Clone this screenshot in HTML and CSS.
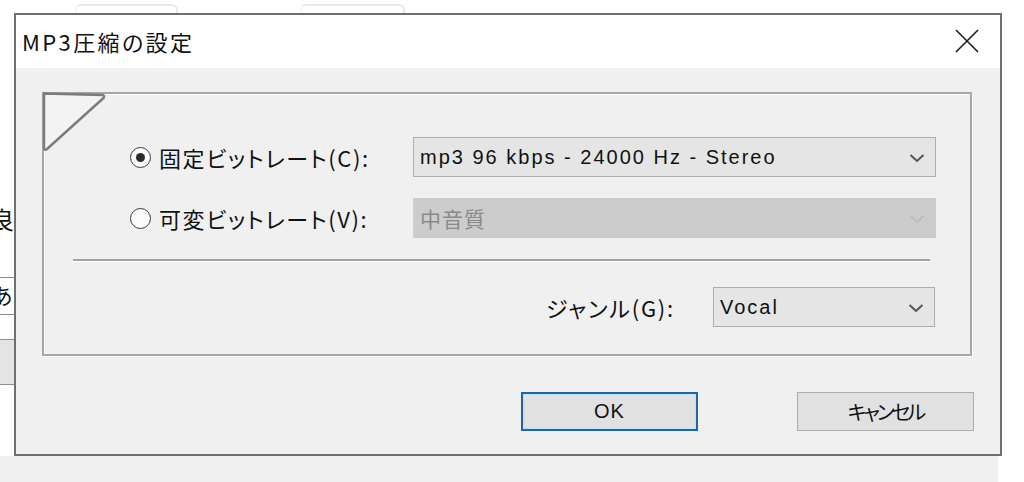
FILE: index.html
```html
<!DOCTYPE html>
<html lang="ja">
<head>
<meta charset="utf-8">
<title>MP3圧縮の設定</title>
<link rel="stylesheet" href="styles.css">
</head>
<body>
<div class="screen">
  <div class="top-strip">
    <span class="ghost ghost-a"></span>
    <span class="ghost ghost-b"></span>
  </div>
  <div class="mid">
    <div class="left-strip jp">
      <div class="ls-char ls-char-a">良</div>
      <div class="ls-line ls-line-a"></div>
      <div class="ls-char ls-char-b">あ</div>
      <div class="ls-line ls-line-b"></div>
      <div class="ls-line ls-line-c"></div>
      <div class="ls-band"></div>
      <div class="ls-line"></div>
    </div>
    <div class="dialog">
      <div class="titlebar">
        <span class="title jp">MP3圧縮の設定</span>
        <svg class="close" width="26" height="26" viewBox="0 0 26 26">
          <path d="M2 2 L24 24 M24 2 L2 24" stroke="#1a1a1a" stroke-width="1.6" fill="none"/>
        </svg>
      </div>
      <div class="body">
        <div class="group">
          <svg class="fold" width="68" height="64" viewBox="0 0 68 64">
            <path d="M3 2.5 L62 4 Q64 5 62.5 7 L6 58 Q3.5 60 3 57 Z" fill="#f3f3f3" stroke="#7b7b7b" stroke-width="2.4" stroke-linejoin="round"/>
          </svg>
          <div class="opt-grid">
            <div class="radio-row jp"><span class="radio checked"></span><span class="label">固定ビットレート(C):</span></div>
            <div class="combo">
              <span class="combo-text">mp3 96 kbps - 24000 Hz - Stereo</span>
              <svg class="chev" width="16" height="10" viewBox="0 0 16 10"><path d="M1.5 2 L8 8 L14.5 2" stroke="#555" stroke-width="2" fill="none"/></svg>
            </div>
            <div class="radio-row jp"><span class="radio"></span><span class="label">可変ビットレート(V):</span></div>
            <div class="combo disabled">
              <span class="combo-text jp">中音質</span>
              <svg class="chev" width="16" height="10" viewBox="0 0 16 10"><path d="M1.5 2 L8 8 L14.5 2" stroke="#bdbdbd" stroke-width="2" fill="none"/></svg>
            </div>
          </div>
          <div class="sep"></div>
          <div class="genre-row">
            <span class="label jp genre-label">ジャンル(G):</span>
            <div class="combo genre">
              <span class="combo-text">Vocal</span>
              <svg class="chev" width="16" height="10" viewBox="0 0 16 10"><path d="M1.5 2 L8 8 L14.5 2" stroke="#555" stroke-width="2" fill="none"/></svg>
            </div>
          </div>
        </div>
        <div class="buttons">
          <div class="btn default">OK</div>
          <div class="btn jp cancel">キャンセル</div>
        </div>
      </div>
    </div>
    <div class="right-strip"></div>
  </div>
  <div class="bottom-strip"><div class="bs-gray"></div></div>
</div>
</body>
</html>
```

FILE: styles.css
```css
* { box-sizing: border-box; }
html, body { margin: 0; padding: 0; }
body {
  width: 1024px;
  height: 482px;
  overflow: hidden;
  background: #ffffff;
  font-family: "Liberation Sans", Arial, sans-serif;
  color: #000;
}
.jp {
  font-family: "Noto Sans CJK JP", "Noto Sans", sans-serif;
  font-feature-settings: "palt" 1;
}
.screen {
  width: 1024px;
  height: 482px;
  display: flex;
  flex-direction: column;
}

/* background window remnants */
.top-strip {
  height: 13px;
  display: flex;
  align-items: flex-start;
  padding-left: 75px;
  gap: 122px;
  background: #fff;
}
.ghost {
  display: block;
  margin-top: 4px;
  height: 9px;
  border: 2px solid #e8e8e8;
  border-bottom: none;
  border-left-color: #f6f6f6;
  border-radius: 6px 6px 0 0;
}
.ghost-a { width: 103px; }
.ghost-b { width: 105px; }

.mid {
  height: 443px;
  display: flex;
}
.left-strip {
  width: 14px;
  background: #fff;
  overflow: hidden;
  display: flex;
  flex-direction: column;
}
.ls-char {
  font-size: 24px;
  line-height: 26px;
  white-space: nowrap;
  color: #111;
}
.ls-char-a { margin-top: 193px; margin-left: -10px; }
.ls-line { height: 1px; background: #8e8e8e; flex: none; }
.ls-line-a { margin-top: 45px; }
.ls-char-b { margin-top: 4px; margin-left: -9px; font-size: 22px; line-height: 24px; }
.ls-line-b { margin-top: 8px; }
.ls-line-c { margin-top: 24px; }
.ls-band { height: 44px; background: #e4e4e4; }

.dialog {
  width: 988px;
  height: 443px;
  border: 2px solid #6f6f6f;
  display: flex;
  flex-direction: column;
  background: #f0f0f0;
}
.titlebar {
  height: 53px;
  background: #fff;
  display: flex;
  align-items: center;
  justify-content: space-between;
  padding: 0 20px 0 6px;
}
.title {
  font-size: 22px;
  letter-spacing: 2.4px;
  color: #111;
  margin-top: -2px;
}
.close { display: block; margin-top: -1px; }

.body {
  flex: 1;
  padding: 24px 26px 0 26px;
  display: flex;
  flex-direction: column;
}
.group {
  position: relative;
  margin-right: 2px;
  border: 2px solid #a6a6a6;
  box-shadow: 1px 1px 0 #ffffff, inset 1px 1px 0 #ffffff;
  padding: 43px 34px 27px 86px;
}
.fold {
  position: absolute;
  left: -3px;
  top: -3px;
}
.opt-grid {
  display: grid;
  grid-template-columns: 283px 523px;
  grid-auto-rows: 40px;
  row-gap: 21px;
}
.radio-row {
  display: flex;
  align-items: center;
  gap: 8px;
}
.label {
  font-size: 22px;
  letter-spacing: 1.6px;
  color: #111;
}
.radio {
  width: 21px;
  height: 21px;
  border-radius: 50%;
  border: 1.6px solid #3a3a3a;
  background: #fbfbfb;
  display: flex;
  align-items: center;
  justify-content: center;
  flex: none;
}
.radio.checked::after {
  content: "";
  width: 9px;
  height: 9px;
  border-radius: 50%;
  background: #2b2b2b;
}
.combo {
  height: 40px;
  border: 1px solid #adadad;
  background: #e5e5e5;
  display: flex;
  align-items: center;
  justify-content: space-between;
  padding: 0 10px 0 6px;
}
.combo-text {
  font-size: 20px;
  letter-spacing: 2px;
  color: #111;
}
.chev { display: block; margin-top: 2px; }
.combo.disabled {
  background: #cccccc;
  border-color: #cccccc;
}
.combo.disabled .combo-text {
  color: #8a8a8a;
  font-size: 21px;
  letter-spacing: 1px;
}
.sep {
  margin: 21px 6px 0 -57px;
  height: 3px;
  border-top: 2px solid #a3a3a3;
  border-bottom: 1px solid #ffffff;
}
.genre-row {
  margin-top: 25px;
  display: flex;
  justify-content: flex-end;
  align-items: center;
  gap: 38px;
  padding-right: 1px;
}
.genre-label { letter-spacing: 1.8px; }
.combo.genre { width: 222px; }

.buttons {
  margin-top: 36px;
  display: flex;
  justify-content: flex-end;
  gap: 99px;
}
.btn {
  width: 177px;
  height: 39px;
  border: 1px solid #adadad;
  background: #e1e1e1;
  display: flex;
  align-items: center;
  justify-content: center;
  font-size: 20px;
  letter-spacing: 1px;
  color: #111;
}
.btn.default {
  border: 2px solid #1f66a8;
  box-shadow: inset 0 0 0 1px #bfe3f3;
}
.btn.cancel {
  font-size: 20px;
  letter-spacing: -3px;
}

.right-strip {
  flex: 1;
  background: #fff;
}
.bottom-strip {
  height: 26px;
  display: flex;
  background: #fff;
}
.bs-gray {
  width: 998px;
  background: #f0f0f0;
}
```
